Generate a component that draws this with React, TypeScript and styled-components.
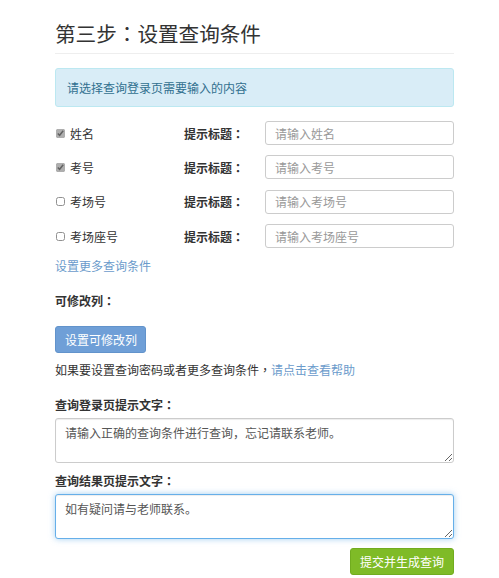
import React, { useState } from 'react';
import styled, { createGlobalStyle } from 'styled-components';

const GlobalStyle = createGlobalStyle`
  html, body {
    margin: 0;
    padding: 0;
    background: #fff;
  }
  body {
    font-family: 'Noto Sans CJK SC', 'Noto Sans', sans-serif;
    font-size: 12px;
    color: #333;
  }
  * {
    box-sizing: border-box;
  }
`;

const Page = styled.div`
  width: 399px;
  margin-left: 55px;
  padding-top: 18px;
`;

const Title = styled.h2`
  margin: 0;
  font-size: 20.6px;
  font-weight: 400;
  line-height: 30px;
  color: #333;
  padding-bottom: 5px;
  border-bottom: 1px solid #eee;
`;

// centred full-width colon, as in the original font
const Colon = styled.span`
  font-family: 'Noto Sans CJK TC', sans-serif;
`;

const Alert = styled.div`
  margin-top: 14px;
  padding: 10px 11px;
  line-height: 17px;
  background: #d9edf7;
  border: 1px solid #bce8f1;
  border-radius: 3px;
  color: #31708f;
`;

const Rows = styled.div`
  margin-top: 14px;
  display: flex;
  flex-direction: column;
  gap: 10.4px;
`;

const Row = styled.div`
  display: grid;
  grid-template-columns: 129px 81px 1fr;
  align-items: center;
  height: 24px;
`;

const Check = styled.label`
  display: flex;
  align-items: center;
  gap: 5px;
  color: #333;
`;

const Box = styled.input`
  margin: 0 0 0 1px;
  width: 9px;
  height: 9px;
  accent-color: #9a9a9a;
  opacity: 0.8;
`;

const Hint = styled.span`
  font-weight: 700;
  color: #333;
`;

const Input = styled.input`
  height: 24px;
  width: 100%;
  padding: 0 9px;
  border: 1px solid #ccc;
  border-radius: 3px;
  font: inherit;
  font-size: 12px;
  color: #555;
  &::placeholder {
    color: #999;
  }
`;

const Link = styled.a<{ $block?: boolean }>`
  display: ${(p) => (p.$block ? 'block' : 'inline')};
  color: #6b9bcb;
  text-decoration: none;
  cursor: pointer;
`;

const MoreLink = styled(Link)`
  margin-top: 9px;
  line-height: 17px;
`;

const Label = styled.div<{ $top: number }>`
  margin-top: ${(p) => p.$top}px;
  font-weight: 700;
  line-height: 17px;
  color: #333;
`;

const Button = styled.button<{ $tone: 'blue' | 'green' }>`
  height: 27px;
  padding: 0 9px;
  border-radius: 3px;
  border: 1px solid ${(p) => (p.$tone === 'blue' ? '#6293cb' : '#71ac1f')};
  background: ${(p) => (p.$tone === 'blue' ? '#6f9fd7' : '#7fbb27')};
  color: #fff;
  font: inherit;
  font-size: 12px;
  white-space: nowrap;
  cursor: pointer;
`;

const SetButton = styled(Button)`
  display: block;
  margin-top: 17px;
  width: 91px;
`;

const Note = styled.p`
  margin: 8px 0 0;
  line-height: 17px;
  color: #333;
`;

const Area = styled.textarea<{ $focus?: boolean }>`
  display: block;
  width: 100%;
  height: 45px;
  margin-top: 5px;
  padding: 5px 9px;
  font: inherit;
  font-size: 12px;
  line-height: 17px;
  color: #555;
  border: 1px solid ${(p) => (p.$focus ? '#66afe9' : '#ccc')};
  border-radius: 3px;
  box-shadow: ${(p) =>
    p.$focus ? 'inset 0 1px 1px rgba(0,0,0,.075), 0 0 6px rgba(102,175,233,.6)' : 'inset 0 1px 1px rgba(0,0,0,.075)'};
  outline: none;
`;

const Footer = styled.div`
  display: flex;
  justify-content: flex-end;
  margin-top: 9px;
`;

const fields = [
  { name: '姓名', checked: true },
  { name: '考号', checked: true },
  { name: '考场号', checked: false },
  { name: '考场座号', checked: false },
];

export default function App() {
  const [checks, setChecks] = useState(fields.map((f) => f.checked));

  return (
    <>
      <GlobalStyle />
      <Page>
        <Title>
          第三步<Colon>：</Colon>设置查询条件
        </Title>
        <Alert>请选择查询登录页需要输入的内容</Alert>

        <Rows>
          {fields.map((f, i) => (
            <Row key={f.name}>
              <Check>
                <Box
                  type="checkbox"
                  checked={checks[i]}
                  onChange={() => setChecks(checks.map((c, j) => (j === i ? !c : c)))}
                />
                {f.name}
              </Check>
              <Hint>
                提示标题<Colon>：</Colon>
              </Hint>
              <Input placeholder={`请输入${f.name}`} />
            </Row>
          ))}
        </Rows>

        <MoreLink $block>设置更多查询条件</MoreLink>

        <Label $top={18}>
          可修改列<Colon>：</Colon>
        </Label>
        <SetButton $tone="blue">设置可修改列</SetButton>
        <Note>
          如果要设置查询密码或者更多查询条件<Colon>，</Colon>
          <Link>请点击查看帮助</Link>
        </Note>

        <Label $top={18}>
          查询登录页提示文字<Colon>：</Colon>
        </Label>
        <Area defaultValue="请输入正确的查询条件进行查询，忘记请联系老师。" />

        <Label $top={9}>
          查询结果页提示文字<Colon>：</Colon>
        </Label>
        <Area $focus defaultValue="如有疑问请与老师联系。" />

        <Footer>
          <Button $tone="green">提交并生成查询</Button>
        </Footer>
      </Page>
    </>
  );
}
